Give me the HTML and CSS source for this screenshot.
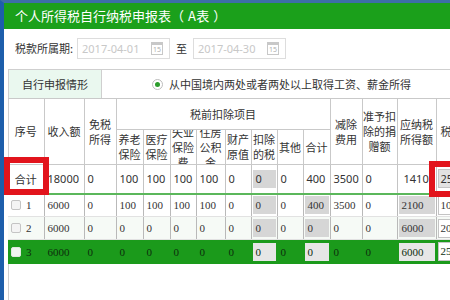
FILE: index.html
```html
<!DOCTYPE html>
<html lang="zh-CN">
<head>
<meta charset="utf-8">
<title>个人所得税自行纳税申报表（A表）</title>
<link rel="stylesheet" href="styles.css">
</head>
<body>
<div class="frame">
  <div class="title">个人所得税自行纳税申报表<span class="paren">（ A表 ）</span></div>
  <div class="period">
    <span class="label">税款所属期:</span>
    <span class="date"><span class="date-text">2017-04-01</span><span class="cal">15</span></span>
    <span class="to">至</span>
    <span class="date"><span class="date-text">2017-04-30</span><span class="cal">15</span></span>
  </div>
  <div class="panel">
    <div class="situation">
      <div class="sit-label">自行申报情形</div>
      <div class="sit-value"><span class="radio"></span>从中国境内两处或者两处以上取得工资、薪金所得</div>
    </div>
    <table class="grid">
      <colgroup>
        <col class="c36"><col class="c40"><col class="c32"><col class="c27"><col class="c27"><col class="c26"><col class="c29"><col class="c26"><col class="c26"><col class="c26"><col class="c27"><col class="c32"><col class="c35"><col class="c39"><col class="c40">
      </colgroup>
      <thead>
        <tr class="h1">
          <th rowspan="2" class="first">序号</th>
          <th rowspan="2">收入额</th>
          <th rowspan="2">免税<br>所得</th>
          <th colspan="8" class="group">税前扣除项目</th>
          <th rowspan="2">减除<br>费用</th>
          <th rowspan="2">准予扣<br>除的捐<br>赠额</th>
          <th rowspan="2">应纳税<br>所得额</th>
          <th rowspan="2" class="last-h">税款</th>
        </tr>
        <tr class="h2">
          <th><div class="clip">养老<br>保险</div></th>
          <th><div class="clip">医疗<br>保险</div></th>
          <th><div class="clip">失业<br>保险<br>费</div></th>
          <th><div class="clip">住房<br>公积<br>金</div></th>
          <th><div class="clip">财产<br>原值</div></th>
          <th><div class="clip">扣除<br>的税</div></th>
          <th><div class="clip">其他</div></th>
          <th><div class="clip">合计</div></th>
        </tr>
      </thead>
      <tbody>
        <tr class="total">
          <td class="first center">合计</td>
          <td>18000</td><td>0</td><td>100</td><td>100</td><td>100</td><td>100</td><td>0</td>
          <td class="f"><span class="fld">0</span></td>
          <td>0</td><td>400</td><td>3500</td><td>0</td><td class="pad7">1410</td>
          <td class="f"><span class="inp gray">25</span></td>
        </tr>
        <tr class="row odd">
          <td class="first"><span class="chk"></span>1</td>
          <td>6000</td><td>0</td><td>100</td><td>100</td><td>100</td><td>100</td><td>0</td>
          <td class="f"><span class="fld">0</span></td>
          <td>0</td>
          <td class="f"><span class="fld">400</span></td>
          <td>3500</td><td>0</td>
          <td class="f"><span class="fld">2100</span></td>
          <td class="f"><span class="inp">10</span></td>
        </tr>
        <tr class="row even">
          <td class="first"><span class="chk"></span>2</td>
          <td>6000</td><td>0</td><td>0</td><td>0</td><td>0</td><td>0</td><td>0</td>
          <td class="f"><span class="fld">0</span></td>
          <td>0</td>
          <td class="f"><span class="fld">0</span></td>
          <td>0</td><td>0</td>
          <td class="f"><span class="fld">6000</span></td>
          <td class="f"><span class="inp">20</span></td>
        </tr>
        <tr class="row selected">
          <td class="first"><span class="chk"></span>3</td>
          <td>6000</td><td>0</td><td>0</td><td>0</td><td>0</td><td>0</td><td>0</td>
          <td class="f"><span class="fld">0</span></td>
          <td>0</td>
          <td class="f"><span class="fld">0</span></td>
          <td>0</td><td>0</td>
          <td class="f"><span class="fld">6000</span></td>
          <td class="f"><span class="inp">25</span></td>
        </tr>
      </tbody>
    </table>
  </div>
  <div class="mark mark-left"></div>
  <div class="mark mark-right"></div>
</div>
</body>
</html>
```

FILE: styles.css
```css
html, body {
  margin: 0;
  padding: 0;
  background: #ffffff;
}
body {
  font-family: "Noto Sans", "Noto Sans CJK SC", sans-serif;
  font-size: 11px;
  color: #333333;
}
.frame {
  position: relative;
  height: 297px;
  overflow: hidden;
  border-left: 4px solid #1d5eab;
  border-top: 3px solid #3c6fa6;
}
.title {
  height: 26px;
  line-height: 26px;
  background: #1ba01b;
  color: #ffffff;
  font-family: "Noto Sans CJK SC", sans-serif;
  font-size: 13px;
  padding-left: 11px;
  white-space: pre;
}
.paren {
  letter-spacing: 0.5px;
}
.period {
  display: flex;
  align-items: center;
  margin-top: 9px;
  padding-left: 11px;
  height: 20px;
  font-family: "Noto Sans CJK SC", sans-serif;
  font-size: 11px;
}
.label {
  width: 62px;
}
.date {
  display: flex;
  align-items: center;
  justify-content: space-between;
  box-sizing: border-box;
  width: 93px;
  height: 21px;
  border: 1px solid #dddddd;
  padding: 0 6px 0 4px;
  color: #c8c8c8;
  font-family: "Noto Sans", sans-serif;
  font-size: 11px;
}
.cal {
  box-sizing: border-box;
  width: 12px;
  height: 13px;
  border: 1px solid #c8c8c8;
  border-top-width: 3px;
  font-size: 7px;
  line-height: 9px;
  text-align: center;
  color: #b0b0b0;
}
.to {
  margin: 0 6px 0 6px;
}
.panel {
  margin-top: 11px;
  margin-left: 4px;
  border-left: 1px solid #cfcfcf;
  border-top: 1px solid #cfcfcf;
  height: 240px;
}
.situation {
  display: flex;
  height: 28px;
  font-family: "Noto Sans CJK SC", sans-serif;
  font-size: 11px;
}
.sit-label {
  width: 92px;
  background: #eaf8ef;
  border-right: 1px solid #cfcfcf;
  display: flex;
  align-items: center;
  justify-content: center;
}
.sit-value {
  display: flex;
  align-items: center;
  padding-left: 50px;
  white-space: nowrap;
}
.radio {
  box-sizing: border-box;
  width: 11px;
  height: 11px;
  border: 1px solid #bdbdbd;
  border-radius: 50%;
  margin-right: 6px;
  display: flex;
  align-items: center;
  justify-content: center;
}
.radio::after {
  content: "";
  width: 5px;
  height: 5px;
  border-radius: 50%;
  background: #2b9c2b;
}
.grid {
  border-collapse: collapse;
  table-layout: fixed;
  width: 468px;
  margin-left: -1px;
}
.c36 { width: 36px; }
.c40 { width: 40px; }
.c32 { width: 32px; }
.c27 { width: 27px; }
.c26 { width: 26px; }
.c29 { width: 29px; }
.c35 { width: 35px; }
.c39 { width: 39px; }
.grid th {
  border: 1px solid #c9c9c9;
  font-weight: normal;
  font-family: "Noto Sans CJK SC", sans-serif;
  font-size: 11px;
  line-height: 15px;
  padding: 0;
  text-align: center;
  vertical-align: middle;
  color: #333333;
  overflow: hidden;
  white-space: nowrap;
}
.grid th.last-h {
  text-align: left;
  padding-left: 4px;
}
.h1 { height: 31px; }
.h2 { height: 35px; }
.clip {
  height: 34px;
  overflow: hidden;
  display: flex;
  align-items: center;
  justify-content: center;
}
.grid td {
  border: 1px solid #c4c4c4;
  padding: 0 3px;
  white-space: nowrap;
  overflow: hidden;
  vertical-align: middle;
}
.total {
  height: 29px;
  font-family: "Noto Sans", "Noto Sans CJK SC", sans-serif;
  font-size: 11px;
}
.total td {
  border-bottom: 2px solid #5bb75b;
}
.total td.center {
  text-align: center;
  font-family: "Noto Sans CJK SC", sans-serif;
}
.total td.pad7 {
  padding-left: 6px;
}
.row {
  height: 23px;
  font-family: "Liberation Serif", serif;
  font-size: 11px;
}
.row td {
  border-color: #b9b9b9;
  border-top-color: #e2e2e2;
  border-bottom-color: #e2e2e2;
}
.row.odd { background: #ffffff; }
.row.even { background: #f6faf6; }
.row.selected {
  background: #1b9a1b;
  color: #0d2e0d;
  height: 24px;
}
.row.selected td {
  border-color: #1b9a1b;
  border-left-color: #3a9f3a;
}
.grid td.first {
  border-left: 0;
}
.grid th.first {
  border-left: 0;
}
.grid td.f {
  padding: 0 1px;
}
.fld {
  display: block;
  height: 18px;
  line-height: 18px;
  padding-left: 3px;
  background: #d6d6d6;
}
.selected .fld {
  background: #e6e6e6;
}
.inp {
  display: block;
  box-sizing: border-box;
  height: 19px;
  line-height: 17px;
  padding-left: 2px;
  border: 1px solid #c4c4c4;
  background: #ffffff;
}
.inp.gray {
  background: #e2e2e2;
}
.chk {
  display: inline-block;
  box-sizing: border-box;
  width: 10px;
  height: 10px;
  border: 1px solid #c4c4c4;
  border-radius: 2px;
  background: #f4f4f4;
  margin-right: 5px;
  vertical-align: -1px;
}
.selected .chk {
  background: #f0f5f0;
  border-color: #dfe8df;
}
.mark {
  position: absolute;
  box-sizing: border-box;
  border: 6px solid #e2141c;
}
.mark-left {
  left: 0;
  top: 154px;
  width: 45px;
  height: 38px;
}
.mark-right {
  left: 425px;
  top: 158px;
  width: 40px;
  height: 36px;
}
```
